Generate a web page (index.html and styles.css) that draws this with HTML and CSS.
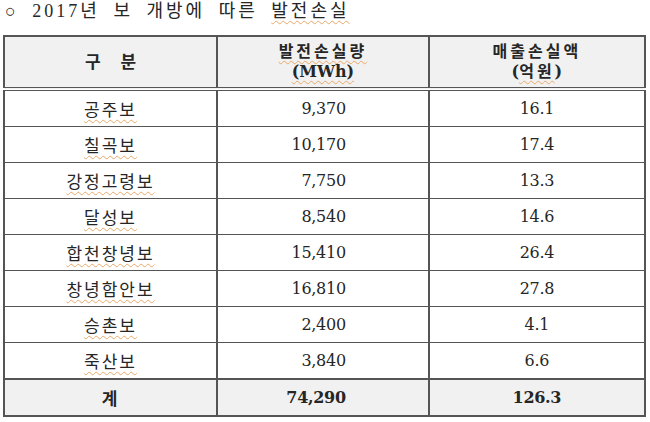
FILE: index.html
```html
<!DOCTYPE html>
<html lang="ko">
<head>
<meta charset="utf-8">
<link rel="stylesheet" href="styles.css">
</head>
<body>
<p class="title">○ 2017년 보 개방에 따른 <span class="sp">발전손실</span></p>
<table class="tbl">
  <colgroup><col class="c1"><col class="c2"><col class="c3"></colgroup>
  <thead>
    <tr>
      <th><span class="gubun">구 분</span></th>
      <th><span class="sp">발전손실량</span><br><span class="sp en">(MWh)</span></th>
      <th>매출손실액<br><span class="en">(</span><span class="sp">억원</span><span class="en">)</span></th>
    </tr>
  </thead>
  <tbody>
    <tr><td class="name"><span class="sp">공주보</span></td><td class="num">9,370</td><td class="amt">16.1</td></tr>
    <tr><td class="name"><span class="sp">칠곡보</span></td><td class="num">10,170</td><td class="amt">17.4</td></tr>
    <tr><td class="name"><span class="sp">강정고령보</span></td><td class="num">7,750</td><td class="amt">13.3</td></tr>
    <tr><td class="name"><span class="sp">달성보</span></td><td class="num">8,540</td><td class="amt">14.6</td></tr>
    <tr><td class="name"><span class="sp">합천창녕보</span></td><td class="num">15,410</td><td class="amt">26.4</td></tr>
    <tr><td class="name"><span class="sp">창녕함안보</span></td><td class="num">16,810</td><td class="amt">27.8</td></tr>
    <tr><td class="name"><span class="sp">승촌보</span></td><td class="num">2,400</td><td class="amt">4.1</td></tr>
    <tr><td class="name"><span class="sp">죽산보</span></td><td class="num">3,840</td><td class="amt">6.6</td></tr>
    <tr class="total"><td class="name">계</td><td class="num">74,290</td><td class="amt">126.3</td></tr>
  </tbody>
</table>
</body>
</html>
```
FILE: styles.css
```css
html, body {
  margin: 0;
  padding: 0;
  background: #ffffff;
}
body {
  font-family: "DejaVu Serif", "Noto Sans CJK KR", serif;
  color: #262626;
}
.title {
  margin: 0;
  padding: 0 0 0 5px;
  height: 35px;
  line-height: 22px;
  font-family: "Liberation Serif", "Noto Sans CJK KR", serif;
  font-size: 18px;
  letter-spacing: 3px;
  word-spacing: 6px;
}
.sp {
  text-decoration: underline wavy #e8a868;
  text-decoration-thickness: 1px;
  text-underline-offset: 3px;
}
.tbl {
  margin-left: 3px;
  width: 643px;
  border-collapse: collapse;
  border: 2px solid #555;
  font-size: 16px;
}
.c1 { width: 214px; }
.c2 { width: 212px; }
.c3 { width: 217px; }
.tbl th {
  background: #f1f1f1;
  height: 50px;
  padding: 0;
  border: 2px solid #555;
  border-bottom: 4px double #555;
  font-weight: bold;
  line-height: 20px;
  font-size: 16px;
  letter-spacing: 3px;
}
.tbl th .en { letter-spacing: 0; }
.gubun { word-spacing: 14px; letter-spacing: 0; font-size: 17px; }
.tbl td {
  height: 35px;
  padding: 0;
  border: 2px solid #555;
  border-top-width: 1px;
  border-bottom-width: 1px;
}
.tbl tbody tr:first-child td { border-top: none; }
.name { text-align: center; font-size: 17px; letter-spacing: 2px; }
.num { text-align: right; padding-right: 82px !important; letter-spacing: -0.3px; }
.amt { text-align: center; letter-spacing: -0.3px; }
.total td {
  background: #f1f1f1;
  font-weight: bold;
  border-top-width: 2px;
}
```
